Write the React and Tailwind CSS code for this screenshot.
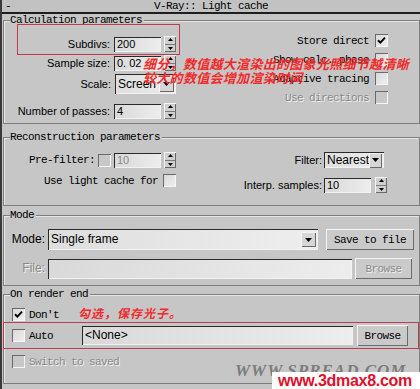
import React from "react";

const MONO = "font-['Liberation_Mono','Noto_Sans_CJK_SC',monospace] text-[11px] tracking-[-0.6px] leading-[12px]";
const SANS = "font-['Liberation_Sans',Arial,sans-serif] text-[11px] leading-[13px]";
const DIS = "text-[#8a8a8a] [text-shadow:1px_1px_0_#f0f0f0]";
const SUNKEN = "shadow-[inset_1px_1px_0_#2a2a2a,inset_-1px_-1px_0_#f2f2f2]";
const RAISED = "shadow-[inset_1px_1px_0_#f4f4f4,inset_-1px_-1px_0_#6a6a6a]";

function Tri({ up }) {
  return (
    <svg width="5" height="3" viewBox="0 0 5 3">
      <path d={up ? "M2.5 0L5 3H0z" : "M0 0H5L2.5 3z"} fill="#000" />
    </svg>
  );
}

function Spinner() {
  return (
    <div className={`w-[12px] h-[16px] flex flex-col bg-[#cfcfcf] ${RAISED}`}>
      <div className="flex-1 flex items-center justify-center">
        <Tri up />
      </div>
      <div className="h-px bg-[#7a7a7a] mx-[1px]" />
      <div className="flex-1 flex items-center justify-center">
        <Tri />
      </div>
    </div>
  );
}

function Field({ w, h = "h-[15px]", value, disabled, className = "" }) {
  return (
    <div
      className={`${w} ${h} ${SUNKEN} bg-linear-to-r from-[#d9d9d9] to-[#ededed] flex items-center pl-[3px] ${SANS} ${
        disabled ? "text-[#8a8a8a]" : "text-black"
      } ${className}`}
    >
      {value}
    </div>
  );
}

function Check({ checked, disabled }) {
  return (
    <div
      className={`w-[13px] h-[13px] shrink-0 flex items-center justify-center ${
        disabled ? "bg-[#c8c8c8]" : "bg-linear-to-br from-[#d8d8d8] to-[#f0f0f0]"
      } shadow-[inset_1px_1px_0_#6a6a6a,inset_-1px_-1px_0_#f6f6f6]`}
    >
      {checked && (
        <svg width="9" height="9" viewBox="0 0 9 9">
          <path d="M1 4.2L3.4 6.6L8 1.6" stroke="#000" strokeWidth="2" fill="none" />
        </svg>
      )}
    </div>
  );
}

function Drop({ w, h, value, arrowW = "w-[15px]" }) {
  return (
    <div
      className={`${w} ${h} ${SUNKEN} bg-linear-to-r from-[#dedede] to-[#eeeeee] flex items-center pl-[3px] pr-[2px] ${SANS}`}
    >
      <span className="flex-1 text-[12px]">{value}</span>
      <div className={`${arrowW} h-[15px] bg-[#d6d6d6] ${RAISED} flex items-center justify-center`}>
        <svg width="7" height="4" viewBox="0 0 7 4">
          <path d="M0 0H7L3.5 4z" fill="#000" />
        </svg>
      </div>
    </div>
  );
}

function Button({ w, label, disabled }) {
  return (
    <div
      className={`${w} h-[21px] bg-[#cacaca] ${RAISED} flex items-center justify-center ${MONO} ${
        disabled ? DIS : "text-black"
      }`}
    >
      {label}
    </div>
  );
}

function Group({ title, className, children }) {
  return (
    <div className={`relative ml-[1px] border border-[#7e7e7e] shadow-[inset_1px_1px_0_#e6e6e6] ${className}`}>
      <span className={`absolute left-[6px] -top-[7px] bg-[#c6c6c6] pr-[2px] ${MONO}`}>{title}</span>
      {children}
    </div>
  );
}

export default function App() {
  return (
    <div className="relative w-[420px] h-[389px] overflow-hidden bg-[#c6c6c6] border-l-2 border-[#3a3a3a] text-black">
      {/* title bar */}
      <div className={`h-[14px] grid grid-cols-[30px_1fr_30px] items-center border-b-2 border-[#1e1e1e] bg-[#c2c2c2] ${MONO}`}>
        <span className="pl-[3px]">-</span>
        <span className="text-center">V-Ray:: Light cache</span>
        <span />
      </div>

      {/* Calculation parameters */}
      <Group title="Calculation parameters" className="mt-[6px] h-[104px] flex">
        <div className="w-[172px] flex flex-col items-end">
          <div className="mt-[15px] h-[16px] flex items-center">
            <span className={`${SANS} mr-[4px]`}>Subdivs:</span>
            <Field w="w-[47px]" value="200" />
            <div className="ml-[3px]">
              <Spinner />
            </div>
          </div>
          <div className="mt-[3px] h-[16px] flex items-center">
            <span className={`${SANS} mr-[4px]`}>Sample size:</span>
            <Field w="w-[47px]" value="0. 02" />
            <div className="ml-[3px]">
              <Spinner />
            </div>
          </div>
          <div className="mt-[3px] h-[20px] flex items-center">
            <span className={`${SANS} mr-[4px]`}>Scale:</span>
            <Drop w="w-[61px]" h="h-[20px]" value="Screen" />
          </div>
          <div className="mt-[9px] h-[16px] flex items-center">
            <span className={`${SANS} mr-[4px]`}>Number of passes:</span>
            <Field w="w-[47px]" value="4" />
            <div className="ml-[3px]">
              <Spinner />
            </div>
          </div>
        </div>
        <div className="flex-1 flex flex-col items-end pr-[31px] pt-[13px] gap-[6px]">
          <div className="h-[13px] flex items-center gap-[6px]">
            <span className={MONO}>Store direct</span>
            <Check checked />
          </div>
          <div className="h-[13px] flex items-center gap-[6px]">
            <span className={MONO}>Show calc. phase</span>
            <Check />
          </div>
          <div className="h-[13px] flex items-center gap-[6px]">
            <span className={MONO}>Adaptive tracing</span>
            <Check />
          </div>
          <div className="h-[13px] flex items-center gap-[6px]">
            <span className={`${MONO} ${DIS}`}>Use directions</span>
            <Check disabled />
          </div>
        </div>
      </Group>

      {/* Reconstruction parameters */}
      <Group title="Reconstruction parameters" className="mt-[13px] h-[69px] flex">
        <div className="w-[172px] flex flex-col items-end">
          <div className="mt-[14px] h-[16px] flex items-center">
            <span className={`${MONO} mr-[3px]`}>Pre-filter:</span>
            <Check disabled />
            <Field w="w-[47px]" value="10" disabled className="ml-[3px]" />
            <div className="ml-[3px]">
              <Spinner />
            </div>
          </div>
          <div className="mt-[6px] h-[13px] flex items-center">
            <span className={`${MONO} mr-[5px]`}>Use light cache for</span>
            <Check />
          </div>
        </div>
        <div className="flex-1 flex flex-col items-end pr-[32px]">
          <div className="mt-[14px] h-[16px] flex items-center mr-[3px]">
            <span className={`${SANS} mr-[2px]`}>Filter:</span>
            <Drop w="w-[60px]" h="h-[16px]" value="Nearest" arrowW="w-[15px]" />
          </div>
          <div className="mt-[9px] h-[16px] flex items-center">
            <span className={`${SANS} mr-[2px]`}>Interp. samples:</span>
            <Field w="w-[47px]" value="10" />
            <div className="ml-[4px]">
              <Spinner />
            </div>
          </div>
        </div>
      </Group>

      {/* Mode */}
      <Group title="Mode" className="mt-[9px] h-[71px]">
        <div className="mt-[13px] h-[21px] flex items-center">
          <span className={`${SANS} w-[41px] text-right text-[12px]`}>Mode:</span>
          <Drop w="w-[270px] ml-[3px]" h="h-[21px]" value="Single frame" />
          <div className="ml-[8px]">
            <Button w="w-[88px]" label="Save to file" />
          </div>
        </div>
        <div className="mt-[8px] h-[21px] flex items-center">
          <span className={`${SANS} w-[41px] text-right text-[12px] ${DIS}`}>File:</span>
          <Field w="w-[304px] ml-[3px]" h="h-[20px]" value="" />
          <div className="ml-[3px]">
            <Button w="w-[57px]" label="Browse" disabled />
          </div>
        </div>
      </Group>

      {/* On render end */}
      <Group title="On render end" className="mt-[8px] h-[90px]">
        <div className="mt-[13px] h-[13px] flex items-center pl-[8px] gap-[4px]">
          <Check checked />
          <span className={MONO}>Don't</span>
        </div>
        <div className="mt-[4px] h-[21px] flex items-center pl-[8px]">
          <Check />
          <span className={`${MONO} ml-[4px] w-[53px]`}>Auto</span>
          <Field w="w-[271px]" h="h-[19px]" value="<None>" className="text-[12px]" />
          <div className="ml-[4px]">
            <Button w="w-[51px]" label="Browse" />
          </div>
        </div>
        <div className="mt-[9px] h-[13px] flex items-center pl-[8px] gap-[4px]">
          <Check disabled />
          <span className={`${MONO} ${DIS}`}>Switch to saved</span>
        </div>
      </Group>

      {/* annotations */}
      <div className="absolute left-[15px] top-[24px] w-[163px] h-[31px] border-[1.5px] border-[#c23a48]" />
      <div className="absolute left-[141px] top-[57px] font-['Noto_Sans_CJK_SC',sans-serif] text-[13px] leading-[14px] italic font-bold text-[#f22a2a] tracking-[0.3px]">
        <div>细分，数值越大渲染出的图象光照细节越清晰</div>
        <div>较大的数值会增加渲染时间</div>
      </div>
      <div className="absolute left-[76px] top-[306px] font-['Noto_Sans_CJK_SC',sans-serif] text-[12px] leading-[14px] italic font-bold text-[#f22a2a] tracking-[1px]">
        勾选，保存光子。
      </div>
      <div className="absolute left-[1px] top-[322px] w-[416px] h-[27px] border-[1.5px] border-[#b8404c]" />

      {/* watermarks */}
      <div className="absolute left-[233px] top-[362px] font-['Liberation_Serif',serif] font-bold italic text-[17px] leading-[18px] text-[#7c7c7c] tracking-[1px]">
        WWW.SPREAD.COM
      </div>
      <div className="absolute left-[270px] top-[372px] w-[150px] h-[17px] bg-white flex items-center pl-[6px] font-['Liberation_Sans',Arial,sans-serif] font-bold text-[16px] leading-[17px] text-[#e0102a] tracking-[-0.3px]">
        www.3dmax8.com
      </div>
    </div>
  );
}
